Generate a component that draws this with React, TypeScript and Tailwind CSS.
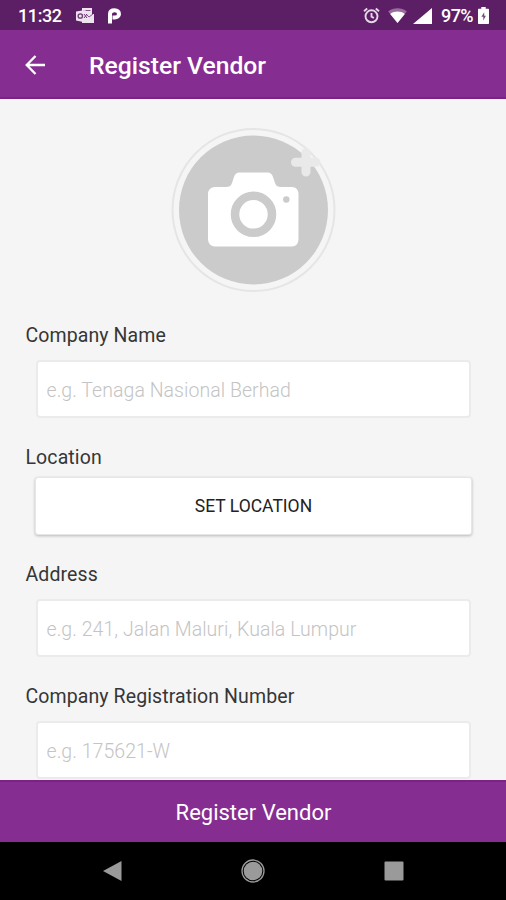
import React, { useState } from 'react';

const StatusIcons: React.FC = () => (
  <div className="flex items-center">
    {/* alarm */}
    <svg className="w-[17px] h-[17px]" viewBox="0 0 17 17" fill="none" stroke="#e6d6e8" strokeWidth="1.9">
      <circle cx="8.5" cy="9.3" r="6" />
      <path d="M8.5 6v3.6l2.4 1.4M1 4.2l3.2-2.7M16 4.2l-3.2-2.7" />
    </svg>
    {/* wifi */}
    <svg className="w-[19px] h-[15px] ml-[8px]" viewBox="0 0 19 15">
      <path d="M9.5 15L0.2 3.4C5.4-0.7 13.6-0.7 18.8 3.4z" fill="#9a6b9f" />
      <path d="M9.5 15L2.2 5.9c4.2-3.2 10.4-3.2 14.6 0z" fill="#fff" />
    </svg>
    {/* signal */}
    <svg className="w-[19px] h-[16px] ml-[6px]" viewBox="0 0 19 16">
      <path d="M19 0v16H0z" fill="#fff" />
    </svg>
    <span className="ml-[9px] w-[34px] text-[18px] font-medium leading-none tracking-[-0.6px]">97%</span>
    {/* battery */}
    <svg className="w-[11px] h-[17px] ml-[3px]" viewBox="0 0 11 17">
      <path d="M3.3 0h4.4v1.8H10c.6 0 1 .4 1 1V16c0 .6-.4 1-1 1H1c-.6 0-1-.4-1-1V2.8c0-.6.4-1 1-1h2.3z" fill="#fff" />
      <path d="M6.2 5.2L3.4 9.8h1.9v3.6l2.600-4.600H6.2z" fill="#75487c" />
    </svg>
  </div>
);

const CameraAvatar: React.FC = () => (
  <svg className="w-[166px] h-[166px]" viewBox="0 0 166 166">
    <circle cx="83.5" cy="83" r="81" fill="#f5f5f5" stroke="#e5e5e5" strokeWidth="2" />
    <circle cx="83.5" cy="83" r="74.5" fill="#cbcbcb" />
    <path
      d="M45 60h11c3 0 5-1 6-4l2-6c1-3 2.5-4.500 5.500-4.500h28c3 0 4.500 1.500 5.500 4.500l2 6c1 3 3 4 6 4h11c4 0 6.500 3 6.500 7v45c0 4.500-2.500 7.500-6.500 7.500H45c-4 0-7-3-7-7.500V67c0-4 3-7 7-7z"
      fill="#fff"
    />
    <circle cx="83.5" cy="87.3" r="18.5" fill="#fff" stroke="#cbcbcb" strokeWidth="8.5" />
    <circle cx="116.3" cy="72.5" r="3.2" fill="#cbcbcb" />
    <path d="M136 25.500v19.500M125.500 35.200h20.500" stroke="#e9e9e9" strokeWidth="9" strokeLinecap="round" />
  </svg>
);

type FieldProps = {
  label: string;
  placeholder: string;
  value: string;
  onChange: (value: string) => void;
};

const Field: React.FC<FieldProps> = ({ label, placeholder, value, onChange }) => (
  <label className="block h-[95px]">
    <span className="block h-6 pl-[25.5px] pt-px text-[19.5px] leading-6 tracking-[0.1px] text-[#363636]">{label}</span>
    <input
      className="block mt-[13px] ml-[36px] w-[435px] h-[58px] rounded-[4px] border-2 border-[#ebebeb] bg-white pl-[8.5px] pt-[2px] text-[19.5px] font-light tracking-[0.05px] text-[#363636] placeholder:text-[#c4c4c4] outline-none"
      placeholder={placeholder}
      value={value}
      onChange={(e) => onChange(e.target.value)}
    />
  </label>
);

export default function App() {
  const [name, setName] = useState('');
  const [address, setAddress] = useState('');
  const [regNumber, setRegNumber] = useState('');

  return (
    <div className="flex flex-col w-[506px] h-[900px] overflow-hidden bg-[#f5f5f5] font-[Roboto,sans-serif]">
      {/* Status bar */}
      <div className="flex shrink-0 items-center justify-between h-[30px] pl-[18px] pr-[17px] pt-px bg-[#5c1f65] text-white">
        <div className="flex items-center">
          <span className="w-[45px] text-[18px] font-medium leading-none tracking-[-0.4px]">11:32</span>
          <svg className="w-[18px] h-[15px] ml-[13px]" viewBox="0 0 18 15">
            <path d="M6 0h10v6h2v9H6z" fill="#eee3ef" />
            <path d="M7.5 2.5h7M10 6l3 3 4-3" stroke="#85578b" fill="none" />
            <path d="M0 3.5L9.5 2v12.5L0 12.5z" fill="#eee3ef" />
            <circle cx="4.3" cy="8" r="2.2" stroke="#6f3c76" strokeWidth="1.3" fill="none" />
            <path d="M8 6l3 4M11 6L8 10" stroke="#6f3c76" />
          </svg>
          <svg className="w-[14px] h-[16px] ml-[14px]" viewBox="0 0 14 16">
            <path
              d="M2 15.5V6C2 3.5 4 2.200 6.700 2.200C9.200 2.200 11 3.700 11 5.900S9.200 9.500 6.700 9.500H4.500"
              fill="none"
              stroke="#fff"
              strokeWidth="4"
            />
          </svg>
        </div>
        <StatusIcons />
      </div>

      {/* App bar */}
      <header className="flex shrink-0 items-center h-[69px] pl-[25px] pt-[2px] border-b-2 border-[#7b2385] bg-[#862d91] text-white">
        <button className="w-[21px] h-[20px]" aria-label="Back">
          <svg className="w-[21px] h-[20px]" viewBox="0 0 21 20" fill="none" stroke="#fff" strokeWidth="2.3">
            <path d="M20 10H2M10.5 1L1.7 10l8.8 9" />
          </svg>
        </button>
        <h1 className="ml-[43px] pt-[4px] text-[24.7px] font-medium leading-none">Register Vendor</h1>
      </header>

      {/* Form */}
      <main className="flex-1 min-h-0 overflow-hidden pt-[28px]">
        <div className="flex justify-center">
          <CameraAvatar />
        </div>

        <div className="flex flex-col gap-[27px] mt-[30px]">
          <Field label="Company Name" placeholder="e.g. Tenaga Nasional Berhad" value={name} onChange={setName} />

          <div className="h-[90px]">
            <p className="h-6 pl-[25.5px] pt-px text-[19.5px] leading-6 tracking-[0.1px] text-[#363636]">Location</p>
            <button className="block mt-[8px] ml-[35px] w-[437px] h-[58px] rounded-[3px] border border-[#e6e6e6] bg-white text-[17.5px] text-[#222] shadow-[0_1px_3px_rgba(0,0,0,0.25)]">
              SET LOCATION
            </button>
          </div>

          <Field label="Address" placeholder="e.g. 241, Jalan Maluri, Kuala Lumpur" value={address} onChange={setAddress} />
          <Field label="Company Registration Number" placeholder="e.g. 175621-W" value={regNumber} onChange={setRegNumber} />
        </div>
      </main>

      <button className="shrink-0 h-[62px] border-t-2 border-[#7b2385] bg-[#862d91] pl-px text-[22px] text-white">
        Register Vendor
      </button>

      {/* Navigation bar */}
      <nav className="flex shrink-0 items-center justify-between h-[58px] pl-[103px] pr-[102px] bg-black">
        <svg className="w-[19px] h-[22px]" viewBox="0 0 19 22">
          <path d="M18.5 1v20L0 11z" fill="#9a9a9a" />
        </svg>
        <svg className="w-[24px] h-[24px]" viewBox="0 0 24 24">
          <circle cx="12" cy="12" r="11" fill="none" stroke="#9a9a9a" strokeWidth="1.3" />
          <circle cx="12" cy="12" r="9.3" fill="#9a9a9a" />
        </svg>
        <svg className="w-[20px] h-[20px]" viewBox="0 0 20 20">
          <rect x="0.5" y="0.5" width="19" height="19" rx="1" fill="#9a9a9a" />
        </svg>
      </nav>
    </div>
  );
}
